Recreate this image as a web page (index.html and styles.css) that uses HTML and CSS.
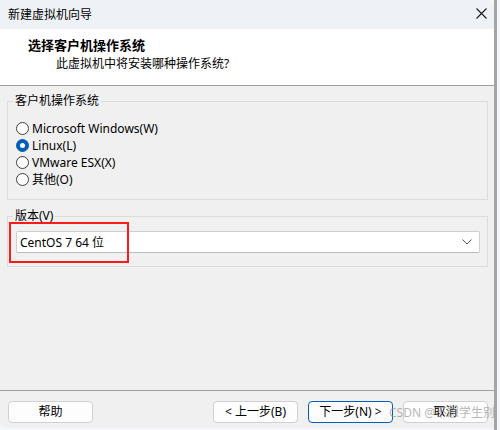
FILE: index.html
```html
<!DOCTYPE html>
<html lang="zh-CN">
<head>
<meta charset="utf-8">
<title>新建虚拟机向导</title>
<link rel="stylesheet" href="styles.css">
</head>
<body>
<div class="screen">
  <div class="window">
    <div class="titlebar">
      <span class="title">新建虚拟机向导</span>
      <svg class="close" width="11" height="11" viewBox="0 0 11 11"><path d="M0.5 0.5 L10.5 10.5 M10.5 0.5 L0.5 10.5" stroke="#1a1a1a" stroke-width="1.1" fill="none"/></svg>
    </div>
    <div class="header">
      <div class="h-title">选择客户机操作系统</div>
      <div class="h-sub">此虚拟机中将安装哪种操作系统?</div>
    </div>
    <div class="content">
      <fieldset class="group">
        <legend>客户机操作系统</legend>
        <div class="group-os">
          <div class="radio"><span class="dot"></span><span>Microsoft Windows(W)</span></div>
          <div class="radio checked"><span class="dot"></span><span>Linux(L)</span></div>
          <div class="radio"><span class="dot"></span><span>VMware ESX(X)</span></div>
          <div class="radio"><span class="dot"></span><span>其他(O)</span></div>
        </div>
      </fieldset>
      <fieldset class="group group-ver">
        <legend>版本(V)</legend>
        <div class="ver-body">
          <div class="select">
            <span>CentOS 7 64 位</span>
            <svg class="chev" width="10" height="6" viewBox="0 0 10 6"><path d="M0.5 0.5 L5 5 L9.5 0.5" stroke="#555" stroke-width="1" fill="none"/></svg>
          </div>
        </div>
      </fieldset>
      <div class="highlight"></div>
    </div>
    <div class="footer">
      <button class="btn">帮助</button>
      <div class="nav">
        <button class="btn">&lt; 上一步(B)</button>
        <button class="btn focus">下一步(N) &gt;</button>
        <button class="btn">取消</button>
      </div>
      <div class="watermark">CSDN @不想学生别问我</div>
    </div>
  </div>
  <div class="edge"></div>
</div>
</body>
</html>
```
FILE: styles.css
```css
* { box-sizing: border-box; }
html, body { margin: 0; padding: 0; }
body {
  width: 500px;
  height: 430px;
  overflow: hidden;
  background: #f4f6f9;
  font-family: "Noto Sans", "Noto Sans CJK SC", sans-serif;
  font-size: 12px;
  color: #000;
}
.screen { display: flex; width: 500px; height: 430px; }
.window {
  position: relative;
  width: 494px;
  height: 428px;
  background: #f0f0f0;
  display: flex;
  flex-direction: column;
  border-radius: 0 8px 0 8px;
  overflow: hidden;
}
.edge { width: 3px; height: 430px; background: #a4a4a4; }
.titlebar {
  height: 29px;
  background: #eef2f7;
  display: flex;
  align-items: center;
  justify-content: space-between;
  padding: 0 7px 0 8px;
}
.title { line-height: 16px; }
.close { display: block; margin-top: -2px; }
.header {
  height: 57px;
  background: #fff;
  border-bottom: 1px solid #a0a0a0;
  padding-top: 7px;
}
.h-title {
  font-weight: bold;
  font-size: 13px;
  line-height: 18px;
  padding-left: 28px;
}
.h-sub {
  line-height: 17px;
  padding-left: 56px;
  margin-top: 1px;
}
.content {
  position: relative;
  flex: 1;
  padding: 7px 6px 0 7px;
}
.group {
  margin: 0;
  border: 1px solid #dcdcdc;
  padding: 0;
  min-width: 0;
}
.group legend {
  margin-left: 5px;
  padding: 0 2px;
  line-height: 16px;
}
.group-os { padding: 11px 0 11px 8px; }
.radio {
  display: flex;
  align-items: center;
  height: 17px;
  gap: 3px;
  line-height: 16px;
}
.dot {
  flex: none;
  width: 13px;
  height: 13px;
  border-radius: 50%;
  border: 1px solid #404040;
  background: #fff;
  position: relative;
}
.radio.checked .dot {
  background: #005fb8;
  border-color: #005fb8;
}
.radio.checked .dot::after {
  content: "";
  position: absolute;
  left: 3px;
  top: 3px;
  width: 5px;
  height: 5px;
  border-radius: 50%;
  background: #fff;
}
.group-ver { margin-top: 8px; }
.ver-body { padding: 7px 7px 13px 8px; }
.select {
  height: 22px;
  background: #fff;
  border: 1px solid #cfcfcf;
  border-bottom-color: #bcbcbc;
  border-radius: 2px;
  display: flex;
  align-items: center;
  justify-content: space-between;
  padding: 0 7px 0 3px;
}
.chev { display: block; }
.highlight {
  position: absolute;
  left: 9px;
  top: 136px;
  width: 120px;
  height: 41px;
  border: 2px solid #ff1a1a;
}
.footer {
  position: relative;
  height: 38px;
  border-top: 1px solid #a0a0a0;
  display: flex;
  justify-content: space-between;
  padding: 10px 6px 0 8px;
}
.nav { display: flex; gap: 10px; }
.btn {
  width: 85px;
  height: 22px;
  background: #fdfdfd;
  border: 1px solid #d0d0d0;
  border-radius: 4px;
  font-family: inherit;
  font-size: 12px;
  color: #000;
  padding: 0;
  line-height: 18px;
}
.btn.focus { border-color: #005fb8; }
.watermark {
  position: absolute;
  left: 389px;
  top: 14px;
  white-space: nowrap;
  color: rgba(150, 150, 150, 0.7);
  font-size: 12px;
  line-height: 16px;
}
```
